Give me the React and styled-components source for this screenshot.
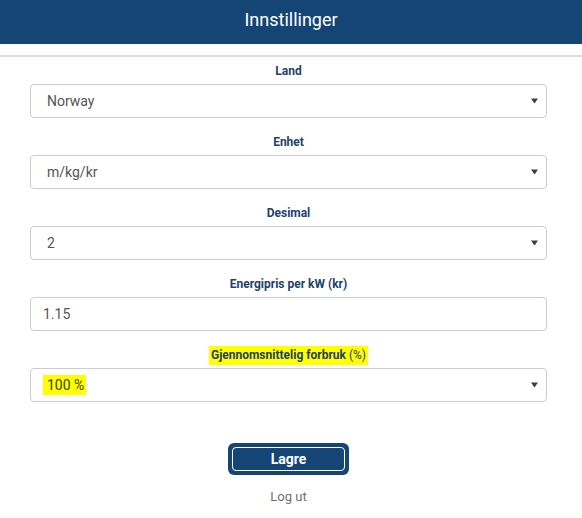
import React from "react";
import styled, { createGlobalStyle } from "styled-components";

const Global = createGlobalStyle`
  html, body { margin: 0; padding: 0; background: #fff; }
  body { font-family: Roboto, "Liberation Sans", Arial, sans-serif; }
  * { box-sizing: border-box; }
`;

const Page = styled.div`
  width: 582px;
  min-height: 518px;
  background: #fff;
`;

const Header = styled.header`
  height: 44px;
  background: #154575;
  color: #fff;
  display: flex;
  align-items: center;
  justify-content: center;
  font-size: 18px;
  padding-bottom: 6px;
`;

const Divider = styled.div`
  margin-top: 11px;
  height: 2px;
  background: #dedede;
`;

const Form = styled.div`
  display: flex;
  flex-direction: column;
  padding: 7px 35px 0 30px;
`;

const Field = styled.div`
  display: flex;
  flex-direction: column;
  margin-bottom: 17px;
`;

const Label = styled.div`
  text-align: center;
  font-size: 12px;
  line-height: 14px;
  font-weight: 700;
  color: #24416b;
  margin-bottom: 6px;
`;

const Mark = styled.span`
  background: ${(p) => (p.$on ? "#ffff00" : "transparent")};
  padding: ${(p) => (p.$on ? "2px 2px 3px" : "0")};
`;

const Light = styled.span`
  font-weight: 400;
`;

const Box = styled.div`
  height: 34px;
  border: 1px solid #cccccc;
  border-radius: 4px;
  display: flex;
  align-items: center;
  justify-content: space-between;
  padding: 0 8px 0 ${(p) => (p.$input ? "12px" : "16px")};
  font-family: Roboto, "Liberation Sans", Arial, sans-serif;
  font-size: 14px;
  color: #555;
`;

const Value = styled.span`
  background: ${(p) => (p.$on ? "#ffff00" : "transparent")};
  margin-left: ${(p) => (p.$on ? "-4px" : "0")};
  padding: ${(p) => (p.$on ? "2px 2px 2px 4px" : "0")};
  color: ${(p) => (p.$on ? "#3c3c22" : "#555")};
`;

const Caret = () => (
  <svg width="7" height="6" viewBox="0 0 7 6">
    <path d="M0 0.5 H7 L3.5 5.5 Z" fill="#3d3d3d" />
  </svg>
);

const Actions = styled.div`
  display: flex;
  flex-direction: column;
  align-items: center;
  margin-top: 24px;
`;

const SaveButton = styled.button`
  width: 121px;
  height: 32px;
  background: #154575;
  border: none;
  border-radius: 6px;
  padding: 4px;
  cursor: pointer;
  display: flex;
`;

const SaveInner = styled.span`
  flex: 1;
  border: 1px solid #fff;
  border-radius: 4px;
  color: #fff;
  font-family: Roboto, "Liberation Sans", Arial, sans-serif;
  font-size: 14px;
  font-weight: 700;
  display: flex;
  align-items: center;
  justify-content: center;
`;

const Logout = styled.a`
  margin-top: 14px;
  font-size: 13px;
  color: #707070;
  text-decoration: none;
`;

const fields = [
  { label: "Land", value: "Norway" },
  { label: "Enhet", value: "m/kg/kr" },
  { label: "Desimal", value: "2" },
  { label: "Energipris per kW (kr)", value: "1.15", input: true },
  { label: "Gjennomsnittelig forbruk", suffix: "(%)", value: "100 %", mark: true },
];

export default function App() {
  return (
    <Page>
      <Global />
      <Header>Innstillinger</Header>
      <Divider />
      <Form>
        {fields.map((f) => (
          <Field key={f.label}>
            <Label>
              <Mark $on={f.mark}>
                {f.label}
                {f.suffix && <Light> {f.suffix}</Light>}
              </Mark>
            </Label>
            <Box $input={f.input}>
              <Value $on={f.mark}>{f.value}</Value>
              {!f.input && <Caret />}
            </Box>
          </Field>
        ))}
        <Actions>
          <SaveButton>
            <SaveInner>Lagre</SaveInner>
          </SaveButton>
          <Logout href="#">Log ut</Logout>
        </Actions>
      </Form>
    </Page>
  );
}
